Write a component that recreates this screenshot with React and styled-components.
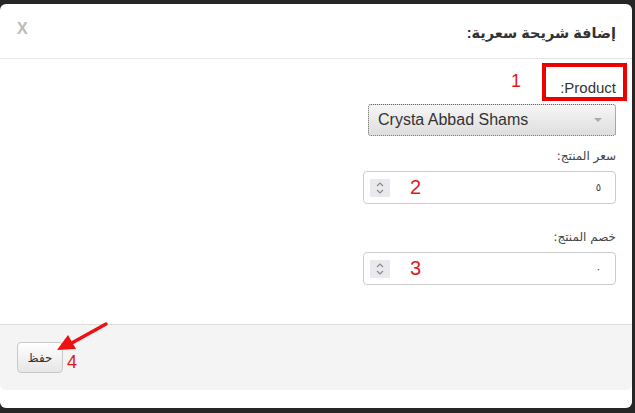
import * as React from "react";
import styled, { createGlobalStyle } from 'styled-components';

const GlobalStyle = createGlobalStyle`
    body {
        margin: 0;
        background: #262626;
        font-family: "Liberation Sans", "DejaVu Sans", sans-serif;
    }
`;

const Modal = styled.div`
    position: relative;
    width: 632px;
    height: 404px;
    margin-top: 4px;
    background: #fff;
    border-radius: 6px;
    display: flex;
    flex-direction: column;
    padding-bottom: 18px;
    box-sizing: border-box;
`;

const Header = styled.div`
    height: 54px;
    border-bottom: 1px solid #e5e5e5;
    display: flex;
    align-items: center;
    justify-content: space-between;
    padding: 0 16px 0 17px;
`;

const Title = styled.h4`
    margin: 0;
    font-size: 14.5px;
    font-weight: bold;
    color: #333;
    margin-top: 4px;
`;

const Close = styled.span`
    font-size: 16px;
    font-weight: bold;
    color: #bbb;
    margin-top: -4px;
`;

const Body = styled.div`
    flex: 1;
    display: flex;
    flex-direction: column;
    align-items: flex-start;
    padding: 4px 16px 0 0;
`;

const LabelRow = styled.div`
    display: flex;
    align-items: center;
    margin-right: -11px;
`;

const MarkedLabel = styled.label`
    box-sizing: border-box;
    height: 38px;
    width: 85px;
    border: 4px solid #ee0000;
    font-size: 15px;
    color: #333;
    padding: 12px 7px 0 0;
`;

const Note = styled.span`
    color: #e01818;
    font-family: "Liberation Sans", sans-serif;
    font-size: ${props => props.size || 18}px;
    margin: ${props => props.gap || '0'};
`;

const Select = styled.div`
    box-sizing: border-box;
    margin-top: 3px;
    width: 248px;
    height: 32px;
    border: 1px dotted #666;
    border-radius: 3px;
    background: linear-gradient(#f6f6f6, #dedede);
    display: flex;
    align-items: center;
    justify-content: space-between;
    padding: 0 13px 0 9px;
    direction: ltr;
    font-size: 16px;
    color: #333;
`;

const Caret = styled.span`
    width: 0;
    height: 0;
    border-left: 4px solid transparent;
    border-right: 4px solid transparent;
    border-top: 4px solid #aaa;
`;

const FieldLabel = styled.label`
    font-family: "DejaVu Sans", sans-serif;
    font-size: 12px;
    line-height: 18px;
    color: #444;
    margin-top: ${props => props.top}px;
`;

const NumberBox = styled.div`
    box-sizing: border-box;
    margin-top: 6px;
    width: 253px;
    height: 33px;
    border: 1px solid #ccc;
    border-radius: 4px;
    display: flex;
    align-items: center;
    padding: 0 14px 0 6px;
`;

const Value = styled.span`
    flex: 1;
    font-family: "DejaVu Sans", sans-serif;
    font-size: 10px;
    color: #333;
`;

const Spinner = styled.span`
    width: 20px;
    height: 18px;
    background: #e9e9ee;
    display: flex;
    align-items: center;
    justify-content: center;
`;

const Footer = styled.div`
    height: 65px;
    background: #f4f4f4;
    border-top: 1px solid #dcdcdc;
    border-radius: 0 0 6px 6px;
    display: flex;
    align-items: center;
    justify-content: flex-end;
    padding-left: 17px;
`;

const SaveButton = styled.button`
    box-sizing: border-box;
    width: 46px;
    height: 31px;
    border: 1px solid #c8c8c8;
    border-radius: 4px;
    background: linear-gradient(#fff, #e6e6e6);
    font-family: "DejaVu Sans", sans-serif;
    font-size: 12px;
    color: #333;
    padding: 0;
`;

const Arrow = styled.svg`
    position: absolute;
    left: 50px;
    top: 312px;
`;

const SpinIcon = () => (
    <svg width="10" height="14" viewBox="0 0 10 14">
        <path d="M2 5 L5 2 L8 5" fill="none" stroke="#8a8a8a" strokeWidth="1.2"/>
        <path d="M2 9 L5 12 L8 9" fill="none" stroke="#8a8a8a" strokeWidth="1.2"/>
    </svg>
);

const NumberField = ({value, mark}) => (
    <NumberBox>
        <Value>{value}</Value>
        <Note size={20} gap="0 0 0 20px">{mark}</Note>
        <Spinner><SpinIcon/></Spinner>
    </NumberBox>
);

class App extends React.Component {
    render() {
        return (
            <Modal dir="rtl">
                <GlobalStyle/>
                <Header>
                    <Title>إضافة شريحة سعرية:</Title>
                    <Close>X</Close>
                </Header>
                <Body>
                    <LabelRow>
                        <MarkedLabel>Product:</MarkedLabel>
                        <Note gap="-1px 21px 0 0">1</Note>
                    </LabelRow>
                    <Select>
                        <span>Crysta Abbad Shams</span>
                        <Caret/>
                    </Select>
                    <FieldLabel top={11}>سعر المنتج:</FieldLabel>
                    <NumberField value="٥" mark="2"/>
                    <FieldLabel top={24}>خصم المنتج:</FieldLabel>
                    <NumberField value="٠" mark="3"/>
                </Body>
                <Footer>
                    <Note gap="10px 0 0 4px">4</Note>
                    <SaveButton>حفظ</SaveButton>
                </Footer>
                <Arrow width="64" height="44" viewBox="50 312 64 44">
                    <line x1="106" y1="320" x2="70" y2="340" stroke="#ee1111" strokeWidth="3.5" strokeLinecap="round"/>
                    <polygon points="57,346 76,345 68,331" fill="#ee1111"/>
                </Arrow>
            </Modal>
        );
    }
}

export default App;
